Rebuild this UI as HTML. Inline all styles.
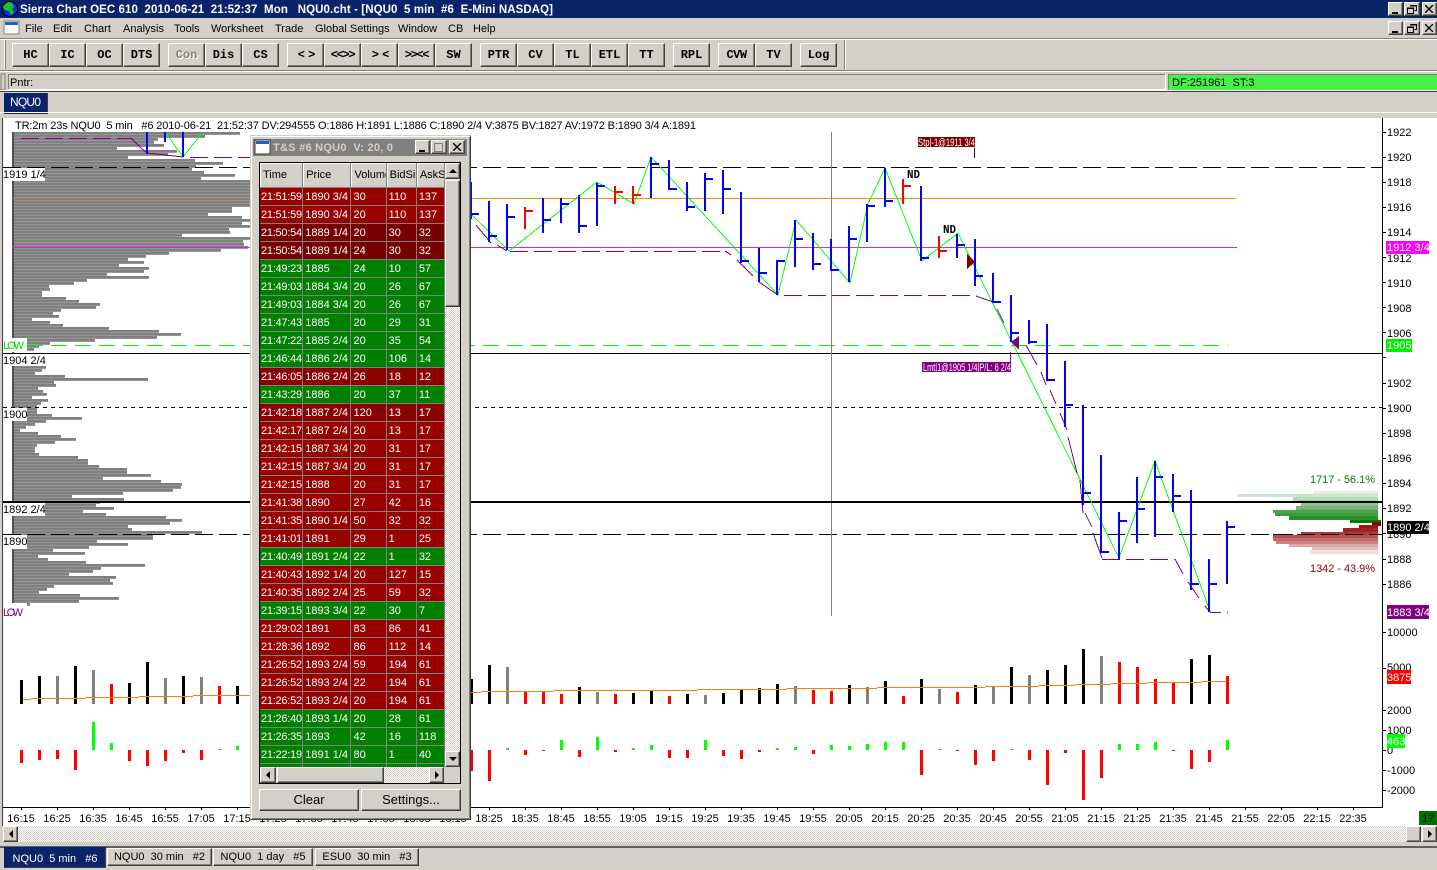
<!DOCTYPE html>
<html><head><meta charset="utf-8"><title>Sierra Chart</title>
<style>
html,body{margin:0;padding:0;background:#d4d0c8}
#p{position:relative;width:1437px;height:870px;overflow:hidden;background:#d4d0c8;font:11px "Liberation Sans",sans-serif}
svg text{font-family:"Liberation Sans",sans-serif;font-size:11px;white-space:pre}
.b{position:absolute;box-sizing:border-box;background:#d4d0c8;border:1px solid;border-color:#fff #404040 #404040 #fff;box-shadow:inset -1px -1px #808080;display:flex;align-items:center;justify-content:center;color:#000;font:12px "Liberation Sans",sans-serif}
.t{top:43px;height:24px;width:37px;font:bold 12px "Liberation Mono",monospace}
.w{position:absolute;left:250px;top:135px;width:221px;height:685px;box-sizing:border-box;background:#d4d0c8;border:1px solid;border-color:#d4d0c8 #404040 #404040 #d4d0c8;box-shadow:inset 1px 1px #fff,inset -1px -1px #808080}
.g{position:absolute;left:259px;top:162px;width:202px;height:622px;box-sizing:border-box;border:1px solid #000;background:#d4d0c8;overflow:hidden}
.g table{position:absolute;left:0;top:0;width:185px;table-layout:fixed;border-collapse:separate;border-spacing:0}
.g td{height:16px;padding:1px 0 0 2px;border-right:1px solid #808080;border-bottom:1px solid #808080;color:#fff;font:11px/16px "Liberation Sans",sans-serif;white-space:nowrap;overflow:hidden;box-sizing:content-box}
.g td:first-child{padding-left:1px;letter-spacing:-.25px;overflow:visible}
.g th{height:22px;padding:1px 0 0 3px;font:11px/23px "Liberation Sans",sans-serif;color:#000;text-align:left;background:#d4d0c8;border-right:1px solid #808080;border-bottom:1px solid #808080;box-shadow:inset 1px 1px #fff;white-space:nowrap;overflow:hidden}
.r td{background:#990000}.d td{background:#780000}.c td{background:#8b0000}.e td{background:#008000}
.h{position:absolute;background:repeating-conic-gradient(#d4d0c8 0 25%,#fff 0 50%) 0 0/2px 2px}
.tb{top:848px;height:18px;font:11px "Liberation Sans",sans-serif;white-space:pre}
</style></head><body><div id="p">

<!-- base -->
<svg width="1437" height="870" style="position:absolute;left:0;top:0" shape-rendering="crispEdges">
<defs><pattern id="pf" patternUnits="userSpaceOnUse" width="10" height="3"><rect width="10" height="2" fill="#808080"/><rect y="2" width="10" height="1" fill="#979797"/></pattern></defs>

<!-- title -->
<rect width="1437" height="18" fill="#0a246a"/>
<circle cx="10" cy="9" r="7.500" fill="#1030e0" stroke="#000" shape-rendering="auto"/>
<path d="M4 5l4-3 4 1 2 4-2 2 2 3-3 3-2-4-4-1-2-3z" fill="#18c818" shape-rendering="auto"/>
<text x="20" y="13" fill="#fff" textLength="533" style="font-weight:bold;font-size:11.5px">Sierra Chart OEC 610  2010-06-21  21:52:37  Mon   NQU0.cht - [NQU0  5 min  #6  E-Mini NASDAQ]</text>

<!-- menu -->
<rect x="4" y="21" width="15" height="13" fill="#fff" stroke="#808080"/><rect x="5" y="22" width="13" height="3" fill="#2060c0"/>
<g fill="#000">
<text x="25" y="32">File</text><text x="53" y="32">Edit</text><text x="84" y="32">Chart</text><text x="123" y="32">Analysis</text><text x="174" y="32">Tools</text><text x="211" y="32">Worksheet</text><text x="275" y="32">Trade</text><text x="315" y="32">Global Settings</text><text x="398" y="32">Window</text><text x="448" y="32">CB</text><text x="473" y="32">Help</text>
</g>
<rect y="38" width="1437" height="1" fill="#808080"/><rect y="39" width="1437" height="1" fill="#fff"/>
<rect x="4" y="40" width="1" height="29" fill="#fff"/><rect x="5" y="40" width="1" height="29" fill="#808080"/>
<rect y="70" width="1437" height="1" fill="#808080"/><rect y="71" width="1437" height="1" fill="#fff"/>
<rect x="844" y="40" width="1" height="30" fill="#808080"/><rect x="845" y="40" width="1" height="30" fill="#fff"/>

<!-- status -->
<rect x="1" y="74" width="4" height="16" fill="none" stroke="#808080"/>
<rect x="8.500" y="74.500" width="1157" height="15" fill="#d4d0c8" stroke="#808080"/>
<rect x="8" y="89" width="1158" height="1" fill="#fff"/><rect x="1165" y="74" width="1" height="16" fill="#fff"/>
<text x="10" y="86">Pntr:</text>
<rect x="1168" y="74" width="269" height="16" fill="#46f046"/><rect x="1168" y="74" width="269" height="1" fill="#808080"/><rect x="1168" y="74" width="1" height="16" fill="#808080"/>
<text x="1172" y="86">DF:251961  ST:3</text>

<!-- tab strip -->
<rect y="90" width="1437" height="1" fill="#fff"/><rect y="91" width="1437" height="1" fill="#404040"/>
<rect x="4" y="93" width="44" height="21" fill="#0a246a"/><rect x="47" y="93" width="1" height="21" fill="#404040"/>
<text x="10" y="106" fill="#fff" textLength="31" style="font-size:12px">NQU0</text>
<rect y="112" width="1437" height="1" fill="#fff"/>

<!-- chart bg -->
<rect x="3" y="118" width="1434" height="708" fill="#fff"/>
<rect x="2" y="118" width="1" height="708" fill="#404040"/>
<text x="15" y="129" textLength="681">TR:2m 23s NQU0  5 min   #6 2010-06-21  21:52:37 DV:294555 O:1886 H:1891 L:1886 C:1890 2/4 V:3875 BV:1827 AV:1972 B:1890 3/4 A:1891</text>

<!-- profile -->
<line x1="470" x2="1236" y1="198.500" y2="198.500" stroke="#ff8c00"/>
<path fill="none" stroke="url(#pf)" stroke-width="3" d="M13 133.500H240M13 136.500H205M13 139.500H158M13 142.500H154M13 145.500H164M13 148.500H117M13 151.500H177M13 154.500H168M13 157.500H128M13 160.500H195M13 163.500H223M13 166.500H196M13 169.500H192M13 172.500H204M13 175.500H235M13 178.500H201M13 181.500H250M13 184.500H250M13 187.500H250M13 190.500H250M13 193.500H250M13 196.500H250M13 199.500H250M13 202.500H250M13 205.500H250M13 208.500H232M13 211.500H232M13 214.500H208M13 217.500H242M13 220.500H250M13 223.500H242M13 226.500H250M13 229.500H229M13 232.500H230M13 235.500H182M13 238.500H250M13 241.500H243M13 244.500H244M13 247.500H248M13 250.500H221M13 253.500H169M13 256.500H146M13 259.500H128M13 262.500H144M13 265.500H119M13 268.500H149M13 271.500H144M13 274.500H107M13 277.500H149M13 280.500H87M13 283.500H74M13 286.500H49M13 289.500H50M13 292.500H42M13 295.500H42M13 298.500H66M13 301.500H79M13 304.500H100M13 307.500H96M13 310.500H61M13 313.500H53M13 316.500H59M13 319.500H32M13 322.500H50M13 325.500H63M13 328.500H109M13 331.500H159M13 334.500H181M13 337.500H157M13 340.500H95M13 343.500H50M13 346.500H39M13 349.500H34M13 367.500H46M13 370.500H42M13 373.500H35M13 376.500H65M13 379.500H148M13 382.500H54M13 385.500H56M13 388.500H38M13 391.500H43M13 394.500H47M13 397.500H32M13 400.500H48M13 403.500H41M13 406.500H37M13 409.500H37M13 412.500H37M13 415.500H52M13 418.500H82M13 421.500H46M13 424.500H35M13 427.500H26M13 430.500H20M13 433.500H38M13 436.500H61M13 439.500H76M13 442.500H55M13 445.500H37M13 448.500H35M13 451.500H35M13 454.500H39M13 457.500H78M13 460.500H88M13 463.500H88M13 466.500H99M13 469.500H127M13 472.500H127M13 475.500H151M13 478.500H103M13 481.500H161M13 484.500H182M13 487.500H181M13 490.500H173M13 493.500H123M13 496.500H72M13 499.500H124M13 502.500H100M13 505.500H96M13 508.500H114M13 511.500H83M13 514.500H106M13 517.500H166M13 520.500H182M13 523.500H170M13 526.500H128M13 529.500H132M13 532.500H202M13 535.500H153M13 538.500H153M13 541.500H97M13 544.500H128M13 547.500H89M13 550.500H53M13 553.500H85M13 556.500H38M13 559.500H48M13 562.500H86M13 565.500H145M13 568.500H101M13 571.500H93M13 574.500H69M13 577.500H116M13 580.500H110M13 583.500H113M13 586.500H54M13 589.500H47M13 592.500H39M13 595.500H80M13 598.500H119M13 601.500H79M27 604.500H30"/>
<rect x="12" y="132" width="2" height="471" fill="#505050"/>
<line x1="13" x2="250" y1="198.500" y2="198.500" stroke="#a08050"/>

<!-- lines -->
<line x1="3" x2="1382" y1="167.500" y2="167.500" stroke="#000" stroke-dasharray="18 6"/>
<line x1="13" x2="1237" y1="247.500" y2="247.500" stroke="#e020e0"/>
<line x1="3" x2="1228" y1="345.500" y2="345.500" stroke="#00f000" stroke-dasharray="16 8"/>
<rect x="3" y="353" width="1379" height="1" fill="#000"/>
<line x1="3" x2="1382" y1="407.500" y2="407.500" stroke="#000" stroke-dasharray="4 4"/>
<line x1="3" x2="1382" y1="534.500" y2="534.500" stroke="#000" stroke-dasharray="18 6"/>
<rect x="831" y="132" width="1" height="484" fill="#808080"/>

<!-- right volume profile -->
<g>
<rect x="1313" y="491" width="65" height="3" fill="#e2efe2"/><rect x="1237" y="494" width="141" height="3" fill="#cde5cd"/><rect x="1293" y="497" width="85" height="3" fill="#b8dcb8"/><rect x="1293" y="500" width="85" height="3" fill="#a8d0a8"/><rect x="1301" y="503" width="77" height="3" fill="#8fc28f"/><rect x="1296" y="506" width="82" height="3" fill="#7ab67a"/><rect x="1296" y="509" width="82" height="1" fill="#6ab06a"/><rect x="1273" y="510" width="105" height="3" fill="#50a450"/><rect x="1275" y="513" width="103" height="3" fill="#3f9c3f"/><rect x="1289" y="516" width="89" height="4" fill="#2a902a"/><rect x="1350" y="520" width="31" height="3" fill="#008000"/>
<rect x="1372" y="522" width="9" height="4" fill="#8b0000"/><rect x="1359" y="525" width="19" height="3" fill="#a01010"/><rect x="1343" y="528" width="35" height="4" fill="#a52020"/><rect x="1301" y="532" width="77" height="3" fill="#b03838"/><rect x="1273" y="535" width="105" height="3" fill="#b85050"/><rect x="1273" y="538" width="105" height="3" fill="#c26a6a"/><rect x="1276" y="541" width="102" height="3" fill="#cc8080"/><rect x="1289" y="544" width="89" height="3" fill="#dda8a8"/><rect x="1312" y="547" width="66" height="3" fill="#e4bebe"/><rect x="1310" y="550" width="68" height="4" fill="#f2dede"/>
</g>
<line x1="1273" x2="1382" y1="534.500" y2="534.500" stroke="#000" stroke-dasharray="18 6"/>
<rect x="3" y="501" width="1379" height="2" fill="#000"/>
<text x="1310" y="483" fill="#008000" textLength="65">1717 - 56.1%</text>
<text x="1310" y="572" fill="#8b0000" textLength="65">1342 - 43.9%</text>

<!-- green zig-zag -->
<polyline fill="none" stroke="#00ff00" points="165,132 183,157 203,132"/>
<polyline fill="none" stroke="#00ff00" points="470,213 509,251 597,182 634,204 651,157 778,295 796,220 850,283 868,204 885,168 922,261 958,233 1119,558 1155,461 1210,611"/>

<!-- purple -->
<g fill="none" stroke="#800080">
<line x1="21" x2="131" y1="138.500" y2="138.500" stroke-dasharray="18 6"/>
<path d="M131 138l10 10M141 148l6 5 36 4"/>
<line x1="190" x2="250" y1="157.500" y2="157.500" stroke-dasharray="18 6"/>
<path d="M476 225L491 243M497 245L507 251M725 251L731 255M737 260L753 276M759 282L778 295M976 296L993 302M997 309L1004 323M1026 345L1037 365M1041 372L1046 385M1050 390L1056 404M1060 413L1067 430M1068 437L1077 473M1080 480L1083 513M1085 513L1092 527M1093 533L1102 558M1175 559L1183 574M1188 582L1199 598M1205 606L1210 612"/>
<line x1="510" x2="726" y1="251.500" y2="251.500" stroke-dasharray="18 6"/>
<line x1="784" x2="970" y1="295.500" y2="295.500" stroke-dasharray="18 6"/>
<line x1="1102" x2="1175" y1="559.500" y2="559.500" stroke-dasharray="18 6"/>
<line x1="1210" x2="1221" y1="612.500" y2="612.500"/>
<rect x="1227" y="612" width="1" height="1" fill="#800080" stroke="none"/>
</g>

<!-- price bars -->
<path fill="none" stroke="#0000ff" stroke-width="2" d="M147 132V154M165 132V142M183 132V157M471 182V219M471 214h8M489 201V242M489 236h8M507 204V250M507 217h8M543 198V233M543 220h8M561 198V223M561 204h8M579 195V233M579 226h8M597 183V226M597 186h8M651 157V198M651 164h8M669 160V190M669 189h8M687 182V211M687 207h8M705 173V211M705 179h8M723 170V214M723 189h8M741 192V263M741 261h8M759 248V282M759 273h8M777 260V295M777 261h8M795 220V267M795 239h8M813 233V270M813 264h8M831 239V271M831 270h8M849 226V282M849 239h8M867 204V242M867 206h8M885 168V207M885 201h8M921 186V261M921 258h8M957 234V258M957 245h8M975 239V286M975 276h8M993 273V303M993 302h8M1011 295V342M1011 333h8M1029 320V344M1029 342h8M1047 324V381M1047 380h8M1065 361V427M1065 405h8M1083 405V505M1083 493h8M1101 455V553M1101 552h8M1119 512V559M1119 521h8M1137 477V543M1137 509h8M1155 461V537M1155 477h8M1173 474V512M1173 496h8M1191 490V590M1191 584h8M1209 559V612M1209 584h8M1227 521V584M1227 527h8"/>
<path fill="none" stroke="#ff0000" stroke-width="2" d="M525 207V229M525 211h8M615 186V204M615 192h8M633 186V204M633 195h8M903 179V204M903 186h8M939 236V258M939 251h8"/>

<!-- annotations -->
<text x="907" y="178" textLength="13" lengthAdjust="spacingAndGlyphs" style="font:bold 12px 'Liberation Mono',monospace">ND</text>
<text x="943" y="233" textLength="13" lengthAdjust="spacingAndGlyphs" style="font:bold 12px 'Liberation Mono',monospace">ND</text>
<rect x="918" y="137" width="57" height="10" fill="#800000"/>
<text x="918" y="146" fill="#fff" style="font-size:11px" textLength="57" lengthAdjust="spacingAndGlyphs">Stp|-1@1911 3/4</text>
<rect x="974" y="148" width="1" height="10" fill="#800000"/>
<rect x="922" y="362" width="89" height="10" fill="#800080"/>
<text x="923" y="371" fill="#fff" style="font-size:11px" textLength="88" lengthAdjust="spacingAndGlyphs">Lmt|1@1905 1/4|P/L: 6 2/4</text>
<rect x="1010" y="352" width="1" height="10" fill="#800080"/>
<polygon points="967,254 975,262 967,269" fill="#800000"/>
<polygon points="1011,342 1019,336 1019,350" fill="#800080"/>

<!-- left labels -->
<g fill="#fff"><rect x="3" y="168" width="42" height="13"/><rect x="3" y="338" width="24" height="14"/><rect x="3" y="354" width="42" height="12"/><rect x="3" y="408" width="24" height="13"/><rect x="3" y="503" width="42" height="13"/><rect x="3" y="535" width="24" height="14"/></g>
<text x="3" y="178">1919 1/4</text><text x="3" y="364">1904 2/4</text><text x="3" y="418">1900</text><text x="3" y="513">1892 2/4</text><text x="3" y="545">1890</text>
<text x="3" y="349" fill="#00e000" textLength="21">LOW</text><text x="3" y="616" fill="#800080" textLength="20">LOW</text>

<!-- volume -->
<path fill="none" stroke="#000" stroke-width="3" d="M21.500 704V680M39.500 704V676M75.500 704V666M129.500 704V683M147.500 704V662M183.500 704V676M237.500 704V686M471.500 704V679M489.500 704V665M579.500 704V687M633.500 704V693M651.500 704V691M687.500 704V694M723.500 704V693M741.500 704V689M759.500 704V688M777.500 704V684M849.500 704V685M885.500 704V681M921.500 704V679M975.500 704V685M1011.500 704V667M1047.500 704V670M1065.500 704V665M1083.500 704V649M1191.500 704V659M1209.500 704V655"/>
<path fill="none" stroke="#808080" stroke-width="3" d="M57.500 704V676M93.500 704V670M165.500 704V678M201.500 704V677M507.500 704V667M597.500 704V692M705.500 704V695M795.500 704V686M867.500 704V687M939.500 704V689M993.500 704V687M1029.500 704V675M1101.500 704V656"/>
<path fill="none" stroke="#ff0000" stroke-width="3" d="M111.500 704V684M219.500 704V686M525.500 704V692M543.500 704V692M561.500 704V694M615.500 704V694M669.500 704V696M813.500 704V690M831.500 704V691M903.500 704V696M957.500 704V692M1119.500 704V662M1137.500 704V667M1155.500 704V679M1173.500 704V682M1227.500 704V676"/>
<path fill="none" stroke="#ff8000" d="M23 699.500H31M31 698.500H85M85 697.500H139M139 696.500H193M193 695.500H250M470 692.500H481M481 691.500H553M553 690.500H697M697 689.500H787M787 688.500H877M877 687.500H985M985 686.500H1039M1039 685.500H1075M1075 684.500H1111M1111 683.500H1147M1147 682.500H1201M1201 681.500H1227"/>

<!-- delta -->
<path fill="none" stroke="#ff0000" stroke-width="3" d="M21.500 750V763M39.500 750V760M57.500 750V759M75.500 750V770M129.500 750V761M147.500 750V766M165.500 750V761M183.500 750V753M201.500 750V760M471.500 750V771M489.500 750V781M525.500 750V755M543.500 750V751M579.500 750V757M615.500 750V752M669.500 750V758M687.500 750V758M723.500 750V756M741.500 750V759M759.500 750V752M813.500 750V754M921.500 750V775M957.500 750V751M975.500 750V765M993.500 750V761M1029.500 750V760M1047.500 750V785M1065.500 750V753M1083.500 750V800M1101.500 750V778M1173.500 750V751M1191.500 750V769M1209.500 750V762"/>
<path fill="none" stroke="#00ff00" stroke-width="3" d="M93.500 750V722M111.500 750V743M219.500 750V749M237.500 750V746M507.500 750V748M561.500 750V740M597.500 750V737M633.500 750V748M651.500 750V745M705.500 750V740M777.500 750V748M795.500 750V747M831.500 750V745M849.500 750V746M867.500 750V744M885.500 750V742M903.500 750V742M939.500 750V749M1011.500 750V749M1119.500 750V744M1137.500 750V744M1155.500 750V742M1227.500 750V740"/>

<!-- axis -->
<rect x="1382" y="118" width="1" height="690" fill="#000"/>
<rect x="3" y="807" width="1380" height="1" fill="#000"/>
<path stroke="#000" d="M1382 132.500h4M1382 157.500h4M1382 182.500h4M1382 207.500h4M1382 232.500h4M1382 257.500h4M1382 282.500h4M1382 307.500h4M1382 332.500h4M1382 357.500h4M1382 383.500h4M1382 408.500h4M1382 433.500h4M1382 458.500h4M1382 483.500h4M1382 508.500h4M1382 533.500h4M1382 559.500h4M1382 584.500h4M1382 632.500h4M1382 668.500h4M1382 710.500h4M1382 730.500h4M1382 750.500h4M1382 770.500h4M1382 790.500h4"/>
<g>
<text x="1387" y="136">1922</text><text x="1387" y="161">1920</text><text x="1387" y="186">1918</text><text x="1387" y="211">1916</text><text x="1387" y="236">1914</text><text x="1387" y="262">1912</text><text x="1387" y="287">1910</text><text x="1387" y="312">1908</text><text x="1387" y="337">1906</text><text x="1387" y="387">1902</text><text x="1387" y="412">1900</text><text x="1387" y="437">1898</text><text x="1387" y="462">1896</text><text x="1387" y="487">1894</text><text x="1387" y="512">1892</text><text x="1387" y="538">1890</text><text x="1387" y="563">1888</text><text x="1387" y="588">1886</text>
<text x="1387" y="636">10000</text><text x="1387" y="671">5000</text><text x="1387" y="714">2000</text><text x="1387" y="734">1000</text><text x="1387" y="754">0</text><text x="1387" y="774">-1000</text><text x="1387" y="794">-2000</text>
</g>
<!-- tags -->
<rect x="1386" y="241" width="43" height="13" fill="#ff00ff"/><text x="1387" y="251" fill="#fff">1912 3/4</text>
<rect x="1386" y="339" width="26" height="13" fill="#00f000"/><text x="1387" y="349" fill="#fff">1905</text>
<rect x="1387" y="521" width="42" height="13" fill="#000"/><text x="1387" y="531" fill="#fff">1890 2/4</text>
<rect x="1387" y="605" width="42" height="14" fill="#800080"/><text x="1387" y="616" fill="#fff">1883 3/4</text>
<rect x="1387" y="670" width="24" height="14" fill="#ff0000"/><text x="1387" y="681" fill="#fff">3875</text>
<rect x="1387" y="734" width="18" height="14" fill="#00ff00"/><text x="1387" y="745" fill="#fff">463</text>

<!-- time axis -->
<path stroke="#000" d="M21.500 807v3M57.500 807v3M93.500 807v3M129.500 807v3M165.500 807v3M201.500 807v3M237.500 807v3M489.500 807v3M525.500 807v3M561.500 807v3M597.500 807v3M633.500 807v3M669.500 807v3M705.500 807v3M741.500 807v3M777.500 807v3M813.500 807v3M849.500 807v3M885.500 807v3M921.500 807v3M957.500 807v3M993.500 807v3M1029.500 807v3M1065.500 807v3M1101.500 807v3M1137.500 807v3M1173.500 807v3M1209.500 807v3M1245.500 807v3M1281.500 807v3M1317.500 807v3M1353.500 807v3"/>
<g text-anchor="middle">
<text x="21" y="822">16:15</text><text x="57" y="822">16:25</text><text x="93" y="822">16:35</text><text x="129" y="822">16:45</text><text x="165" y="822">16:55</text><text x="201" y="822">17:05</text><text x="237" y="822">17:15</text><text x="273" y="822">17:25</text><text x="309" y="822">17:35</text><text x="345" y="822">17:45</text><text x="381" y="822">17:55</text><text x="417" y="822">18:05</text><text x="453" y="822">18:15</text>
<text x="489" y="822">18:25</text><text x="525" y="822">18:35</text><text x="561" y="822">18:45</text><text x="597" y="822">18:55</text><text x="633" y="822">19:05</text><text x="669" y="822">19:15</text><text x="705" y="822">19:25</text><text x="741" y="822">19:35</text><text x="777" y="822">19:45</text><text x="813" y="822">19:55</text><text x="849" y="822">20:05</text><text x="885" y="822">20:15</text><text x="921" y="822">20:25</text><text x="957" y="822">20:35</text><text x="993" y="822">20:45</text><text x="1029" y="822">20:55</text><text x="1065" y="822">21:05</text><text x="1101" y="822">21:15</text><text x="1137" y="822">21:25</text><text x="1173" y="822">21:35</text><text x="1209" y="822">21:45</text><text x="1245" y="822">21:55</text><text x="1281" y="822">22:05</text><text x="1317" y="822">22:15</text><text x="1353" y="822">22:35</text>
</g>
<rect x="1419" y="811" width="18" height="14" fill="#007000"/><text x="1422" y="822">17</text>

<!-- bottom bars -->
<rect y="846" width="1437" height="2" fill="#606060"/>
</svg>

<!-- toolbar buttons -->
<div class="b t" style="left:12px">HC</div><div class="b t" style="left:49px">IC</div><div class="b t" style="left:86px">OC</div><div class="b t" style="left:123px">DTS</div>
<div class="b t" style="left:168px;color:#808080;text-shadow:1px 1px #fff">Con</div><div class="b t" style="left:205px">Dis</div><div class="b t" style="left:242px">CS</div>
<div class="b t" style="left:287px;letter-spacing:-2px">&lt; &gt;</div><div class="b t" style="left:324px;letter-spacing:-1.300px">&lt;&lt;&gt;&gt;</div><div class="b t" style="left:361px;letter-spacing:-2px">&gt; &lt;</div><div class="b t" style="left:398px;letter-spacing:-1.300px">&gt;&gt;&lt;&lt;</div><div class="b t" style="left:435px">SW</div>
<div class="b t" style="left:480px">PTR</div><div class="b t" style="left:517px">CV</div><div class="b t" style="left:554px">TL</div><div class="b t" style="left:591px">ETL</div><div class="b t" style="left:628px">TT</div>
<div class="b t" style="left:673px">RPL</div><div class="b t" style="left:718px;letter-spacing:-.5px">CVW</div><div class="b t" style="left:755px">TV</div><div class="b t" style="left:800px">Log</div>

<!-- window controls -->
<div class="b" style="left:1388px;top:2px;width:15px;height:14px"><svg width="9" height="9"><rect x="1" y="7" width="6" height="2"/></svg></div>
<div class="b" style="left:1404px;top:2px;width:16px;height:14px"><svg width="10" height="9"><path d="M3.500.500h6v5h-2M.500 3.500h6v5h-6z" fill="none" stroke="#000" shape-rendering="crispEdges"/><path d="M3 1h7M0 3h7" stroke="#000"/></svg></div>
<div class="b" style="left:1422px;top:2px;width:15px;height:14px"><svg width="9" height="8"><path d="M0 0l8 8M8 0l-8 8" stroke="#000" stroke-width="1.400"/></svg></div>
<div class="b" style="left:1388px;top:21px;width:15px;height:14px"><svg width="9" height="9"><rect x="1" y="7" width="6" height="2"/></svg></div>
<div class="b" style="left:1404px;top:21px;width:16px;height:14px"><svg width="10" height="9"><path d="M3.500.500h6v5h-2M.500 3.500h6v5h-6z" fill="none" stroke="#000" shape-rendering="crispEdges"/><path d="M3 1h7M0 3h7" stroke="#000"/></svg></div>
<div class="b" style="left:1422px;top:21px;width:15px;height:14px"><svg width="9" height="8"><path d="M0 0l8 8M8 0l-8 8" stroke="#000" stroke-width="1.400"/></svg></div>

<!-- main h scrollbar -->
<div class="h" style="left:3px;top:826px;width:1434px;height:16px"></div>
<div class="b" style="left:3px;top:826px;width:15px;height:16px"><svg width="6" height="8"><polygon points="5,0 1,4 5,8"/></svg></div>
<div class="b" style="left:1406px;top:826px;width:15px;height:16px"></div>
<div class="b" style="left:1422px;top:826px;width:15px;height:16px"><svg width="6" height="8"><polygon points="1,0 5,4 1,8"/></svg></div>

<!-- bottom tabs -->
<div class="b tb" style="left:4px;top:847px;height:21px;width:102px;padding-top:2px;background:#0a246a;color:#fff;border-color:#0a246a #404040 #404040 #0a246a;box-shadow:none">NQU0  5 min   #6</div>
<div class="b tb" style="left:107px;width:105px">NQU0  30 min   #2</div>
<div class="b tb" style="left:213px;width:100px">NQU0  1 day   #5</div>
<div class="b tb" style="left:315px;width:104px">ESU0  30 min   #3</div>

<!-- T&S window -->
<div class="w"></div>
<svg width="1437" height="870" style="position:absolute;left:0;top:0" shape-rendering="crispEdges">
<rect x="253" y="139" width="214" height="17" fill="#808080"/>
<rect x="255" y="140" width="15" height="14" fill="#fff" stroke="#404040"/><rect x="256" y="141" width="13" height="3" fill="#2060c0"/>
<text x="273" y="151" fill="#d4d0c8" style="font-weight:bold" textLength="120">T&amp;S #6 NQU0  V: 20, 0</text>
</svg>
<div class="b" style="left:415px;top:140px;width:15px;height:14px"><svg width="9" height="9"><rect x="1" y="7" width="6" height="2"/></svg></div>
<div class="b" style="left:431px;top:140px;width:16px;height:14px"><svg width="10" height="9"><path d="M.500 .500h8v8h-8z" fill="none" stroke="#808080" shape-rendering="crispEdges"/></svg></div>
<div class="b" style="left:449px;top:140px;width:16px;height:14px"><svg width="9" height="8"><path d="M0 0l8 8M8 0l-8 8" stroke="#000" stroke-width="1.400"/></svg></div>

<div class="g">
<table><colgroup><col style="width:43px"><col style="width:48px"><col style="width:35px"><col style="width:30px"><col style="width:28px"></colgroup>
<tr><th>Time</th><th>Price</th><th>Volume</th><th>BidSize</th><th>AskSize</th></tr>
<tr class="r"><td>21:51:59</td><td>1890 3/4</td><td>30</td><td>110</td><td>137</td></tr>
<tr class="r"><td>21:51:59</td><td>1890 3/4</td><td>20</td><td>110</td><td>137</td></tr>
<tr class="d"><td>21:50:54</td><td>1889 1/4</td><td>20</td><td>30</td><td>32</td></tr>
<tr class="d"><td>21:50:54</td><td>1889 1/4</td><td>24</td><td>30</td><td>32</td></tr>
<tr class="e"><td>21:49:23</td><td>1885</td><td>24</td><td>10</td><td>57</td></tr>
<tr class="e"><td>21:49:03</td><td>1884 3/4</td><td>20</td><td>26</td><td>67</td></tr>
<tr class="e"><td>21:49:03</td><td>1884 3/4</td><td>20</td><td>26</td><td>67</td></tr>
<tr class="e"><td>21:47:43</td><td>1885</td><td>20</td><td>29</td><td>31</td></tr>
<tr class="e"><td>21:47:22</td><td>1885 2/4</td><td>20</td><td>35</td><td>54</td></tr>
<tr class="e"><td>21:46:44</td><td>1886 2/4</td><td>20</td><td>106</td><td>14</td></tr>
<tr class="c"><td>21:46:05</td><td>1886 2/4</td><td>26</td><td>18</td><td>12</td></tr>
<tr class="e"><td>21:43:29</td><td>1886</td><td>20</td><td>37</td><td>11</td></tr>
<tr class="c"><td>21:42:18</td><td>1887 2/4</td><td>120</td><td>13</td><td>17</td></tr>
<tr class="r"><td>21:42:17</td><td>1887 2/4</td><td>20</td><td>13</td><td>17</td></tr>
<tr class="r"><td>21:42:15</td><td>1887 3/4</td><td>20</td><td>31</td><td>17</td></tr>
<tr class="r"><td>21:42:15</td><td>1887 3/4</td><td>20</td><td>31</td><td>17</td></tr>
<tr class="r"><td>21:42:15</td><td>1888</td><td>20</td><td>31</td><td>17</td></tr>
<tr class="r"><td>21:41:38</td><td>1890</td><td>27</td><td>42</td><td>16</td></tr>
<tr class="r"><td>21:41:35</td><td>1890 1/4</td><td>50</td><td>32</td><td>32</td></tr>
<tr class="r"><td>21:41:01</td><td>1891</td><td>29</td><td>1</td><td>25</td></tr>
<tr class="e"><td>21:40:49</td><td>1891 2/4</td><td>22</td><td>1</td><td>32</td></tr>
<tr class="r"><td>21:40:43</td><td>1892 1/4</td><td>20</td><td>127</td><td>15</td></tr>
<tr class="r"><td>21:40:35</td><td>1892 2/4</td><td>25</td><td>59</td><td>32</td></tr>
<tr class="e"><td>21:39:15</td><td>1893 3/4</td><td>22</td><td>30</td><td>7</td></tr>
<tr class="r"><td>21:29:02</td><td>1891</td><td>83</td><td>86</td><td>41</td></tr>
<tr class="r"><td>21:28:36</td><td>1892</td><td>86</td><td>112</td><td>14</td></tr>
<tr class="r"><td>21:26:52</td><td>1893 2/4</td><td>59</td><td>194</td><td>61</td></tr>
<tr class="r"><td>21:26:52</td><td>1893 2/4</td><td>22</td><td>194</td><td>61</td></tr>
<tr class="r"><td>21:26:52</td><td>1893 2/4</td><td>20</td><td>194</td><td>61</td></tr>
<tr class="e"><td>21:26:40</td><td>1893 1/4</td><td>20</td><td>28</td><td>61</td></tr>
<tr class="e"><td>21:26:35</td><td>1893</td><td>42</td><td>16</td><td>118</td></tr>
<tr class="e"><td>21:22:19</td><td>1891 1/4</td><td>80</td><td>1</td><td>40</td></tr>
<tr class="e"><td>&nbsp;</td><td></td><td></td><td></td><td></td></tr>
</table>
</div>
<!-- window scrollbars -->
<div class="h" style="left:445px;top:163px;width:15px;height:604px"></div>
<div class="b" style="left:445px;top:163px;width:15px;height:16px"><svg width="8" height="6"><polygon points="0,5 4,1 8,5"/></svg></div>
<div class="b" style="left:445px;top:180px;width:15px;height:127px"></div>
<div class="b" style="left:445px;top:751px;width:15px;height:16px"><svg width="8" height="6"><polygon points="0,1 4,5 8,1"/></svg></div>
<div class="h" style="left:260px;top:767px;width:184px;height:16px"></div>
<div class="b" style="left:260px;top:767px;width:16px;height:16px"><svg width="6" height="8"><polygon points="5,0 1,4 5,8"/></svg></div>
<div class="b" style="left:277px;top:767px;width:107px;height:16px"></div>
<div class="b" style="left:429px;top:767px;width:15px;height:16px"><svg width="6" height="8"><polygon points="1,0 5,4 1,8"/></svg></div>
<div style="position:absolute;left:444px;top:767px;width:16px;height:16px;background:#d4d0c8"></div>
<div class="b" style="left:259px;top:789px;width:100px;height:22px;font-size:13px;padding-bottom:2px">Clear</div>
<div class="b" style="left:361px;top:789px;width:100px;height:22px;font-size:13px;padding-bottom:2px">Settings...</div>

</div></body></html>
